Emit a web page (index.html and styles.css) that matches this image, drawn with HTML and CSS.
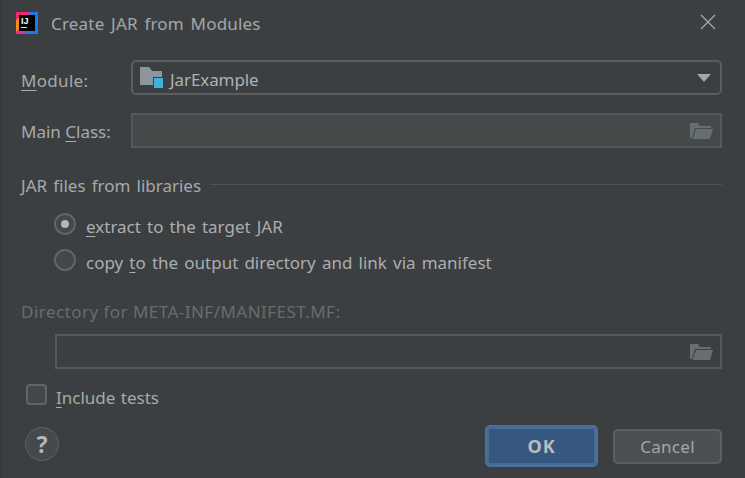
FILE: index.html

```html
<!DOCTYPE html>
<html lang="en">
<head>
    <meta charset="UTF-8">
    <meta name="viewport" content="width=device-width, initial-scale=1.0">
    <title>Create JAR from Modules</title>
    <link rel="stylesheet" href="styles.css">
</head>
<body>
    <div class="dialog">
        <div class="titlebar">
            <svg class="app-icon" width="22" height="22" viewBox="0 0 22 22">
                <defs>
                    <linearGradient id="ijEdge" x1="0" y1="0" x2="1" y2="1">
                        <stop offset="0" stop-color="#f0246f"/>
                        <stop offset="0.55" stop-color="#e8338a"/>
                        <stop offset="1" stop-color="#1f6fe0"/>
                    </linearGradient>
                </defs>
                <rect width="22" height="22" fill="url(#ijEdge)"/>
                <path d="M0 8 L3 6 L3 17 L0 20 Z" fill="#f58a1f"/>
                <path d="M14 0 H22 V22 H10 Z" fill="#1f78e8"/>
                <rect x="3" y="3" width="16" height="16" fill="#000"/>
                <rect x="5" y="15" width="6" height="1" fill="#ddd"/>
                <text class="ij-text" x="5" y="12">IJ</text>
            </svg>
            <span class="title">Create JAR from Modules</span>
            <svg class="close-icon" width="16" height="16" viewBox="0 0 16 16">
                <path d="M1 1 L15 15 M15 1 L1 15" stroke="#a9adaf" stroke-width="1.2" fill="none"/>
            </svg>
        </div>

        <div class="form-row">
            <label class="row-label module-label"><u>M</u>odule:</label>
            <div class="combo">
                <svg width="24" height="22" viewBox="0 0 24 22">
                    <path d="M0 0 H9 L12 4 H22 V18 H0 Z" fill="#8b969e"/>
                    <rect x="13" y="10" width="11" height="12" fill="#3c3f41"/>
                    <rect x="14" y="11" width="9" height="10" fill="#3cb4e0"/>
                </svg>
                <span class="combo-text">JarExample</span>
                <span class="arrow"></span>
            </div>
        </div>

        <div class="form-row class-row">
            <label class="row-label">Main <u>C</u>lass:</label>
            <div class="field disabled-field">
                <svg class="browse" width="23" height="17" viewBox="0 0 23 17">
                    <path d="M0 1 H8 L10 4 H21 V6 H5 L2 16 H0 Z" fill="#656e72"/>
                    <path d="M6 7 H23 L20 17 H2.5 Z" fill="#656e72"/>
                </svg>
            </div>
        </div>

        <div class="section-head">
            <span>JAR files from libraries</span>
            <div class="section-line"></div>
        </div>

        <div class="radio-row first-radio">
            <span class="radio selected"></span>
            <span><u>e</u>xtract to the target JAR</span>
        </div>
        <div class="radio-row">
            <span class="radio"></span>
            <span>copy <u>t</u>o the output directory and link via manifest</span>
        </div>

        <div class="dir-label">Directory for META-INF/MANIFEST.MF:</div>
        <div class="field dir-field">
            <svg class="browse" width="23" height="17" viewBox="0 0 23 17">
                <path d="M0 1 H8 L10 4 H21 V6 H5 L2 16 H0 Z" fill="#656e72"/>
                <path d="M6 7 H23 L20 17 H2.5 Z" fill="#656e72"/>
            </svg>
        </div>

        <div class="check-row">
            <span class="checkbox"></span>
            <span class="check-text"><u>I</u>nclude tests</span>
        </div>

        <div class="footer">
            <div class="help">?</div>
            <div class="buttons">
                <button class="btn btn-ok">OK</button>
                <button class="btn btn-cancel">Cancel</button>
            </div>
        </div>
    </div>
</body>
</html>
```

FILE: styles.css

```css
/* Dialog */
html, body {
    margin: 0;
    padding: 0;
}

body {
    width: 745px;
    height: 478px;
    overflow: hidden;
    background-color: #3c3f41;
    font-family: "Noto Sans", sans-serif;
    font-size: 17px;
    color: #afb1b3;
}

.dialog {
    padding: 0 23px 0 19px;
    height: 478px;
    box-sizing: border-box;
    border-left: 2px solid #37393b;
}

u {
    text-underline-offset: 3px;
    text-decoration-thickness: 1px;
}

/* Title bar */
.titlebar {
    display: flex;
    align-items: center;
    height: 46px;
    margin-left: -5px;
}

.app-icon {
    margin-right: 13px;
}

.ij-text {
    font-family: "Liberation Sans", sans-serif;
    font-size: 9px;
    font-weight: bold;
    fill: #fff;
}

.title {
    flex: 1;
    color: #a3a7aa;
    word-spacing: 2px;
    letter-spacing: 0.2px;
}

.close-icon {
    margin-right: 6px;
    margin-top: -2px;
}

/* Rows */
.form-row {
    display: flex;
    align-items: center;
    margin-top: 14px;
}

.class-row {
    margin-top: 18px;
}

.row-label {
    width: 110px;
    color: #a6a9ab;
    padding-top: 1px;
}

.module-label {
    padding-top: 5px;
    letter-spacing: 0.3px;
}

.combo {
    flex: 1;
    height: 35px;
    box-sizing: border-box;
    border: 2px solid #5a5d5f;
    border-radius: 5px;
    display: flex;
    align-items: center;
    padding-left: 7px;
}

.combo-text {
    flex: 1;
    margin-left: 6px;
    padding-top: 4px;
    letter-spacing: -0.1px;
    color: #afb1b3;
}

.arrow {
    width: 0;
    height: 0;
    border-left: 7px solid transparent;
    border-right: 7px solid transparent;
    border-top: 8px solid #a3a6a8;
    margin-right: 9px;
}

.field {
    flex: 1;
    height: 35px;
    box-sizing: border-box;
    border: 2px solid #56595a;
    display: flex;
    align-items: center;
    justify-content: flex-end;
    padding-right: 7px;
}

.disabled-field {
    background-color: #45494a;
}

.section-head {
    display: flex;
    align-items: center;
    margin-top: 26px;
    color: #a6a9ab;
    line-height: 24px;
    word-spacing: 1.7px;
}

.section-line {
    flex: 1;
    height: 1px;
    background-color: #515456;
    margin-left: 9px;
    margin-top: -4px;
}

.radio-row {
    display: flex;
    align-items: center;
    height: 36px;
    margin-left: 33px;
    gap: 10px;
    color: #abaeb0;
    word-spacing: 1.7px;
}

.first-radio {
    margin-top: 10px;
}

.radio {
    width: 22px;
    height: 22px;
    box-sizing: border-box;
    border: 2px solid #626567;
    border-radius: 50%;
    background-color: #43474a;
    display: flex;
    align-items: center;
    justify-content: center;
    margin-bottom: 5px;
}

.radio.selected::after {
    content: "";
    width: 8px;
    height: 8px;
    border-radius: 50%;
    background-color: #b4b7b9;
}

.dir-label {
    margin-top: 20px;
    color: #696c6e;
    line-height: 24px;
    letter-spacing: 0.47px;
}

.dir-field {
    margin: 10px 0 0 34px;
}

.check-row {
    display: flex;
    align-items: center;
    margin: 16px 0 0 5px;
    gap: 9px;
    color: #a6a9ab;
    height: 24px;
}

.check-text {
    word-spacing: 1px;
}

.checkbox {
    width: 21px;
    height: 21px;
    box-sizing: border-box;
    border: 2px solid #626567;
    border-radius: 4px;
    background-color: #43474a;
    margin-bottom: 5px;
}

/* Footer */
.footer {
    display: flex;
    align-items: center;
    justify-content: space-between;
    margin-top: 16px;
}

.help {
    width: 34px;
    height: 34px;
    box-sizing: border-box;
    border: 1px solid #5e6163;
    border-radius: 50%;
    background-color: #46494b;
    margin-left: 4px;
    margin-bottom: 4px;
    font-size: 23px;
    font-weight: bold;
    color: #b4b6b8;
    display: flex;
    align-items: center;
    justify-content: center;
}

.buttons {
    display: flex;
    align-items: center;
    gap: 15px;
}

.btn {
    font-family: "Noto Sans", sans-serif;
    font-size: 17px;
    box-sizing: border-box;
    border-radius: 5px;
    padding: 0;
}

.btn-ok {
    width: 113px;
    height: 42px;
    background-color: #365880;
    border: 2px solid #4a6f9a;
    outline: 2px solid #466d94;
    outline-offset: -4px;
    font-weight: bold;
    font-size: 18px;
    letter-spacing: 1px;
    color: #bbbcbd;
}

.btn-cancel {
    width: 109px;
    height: 35px;
    background-color: #4c5052;
    border: 2px solid #5e6060;
    letter-spacing: 0.3px;
    color: #a3a6a8;
}
```
